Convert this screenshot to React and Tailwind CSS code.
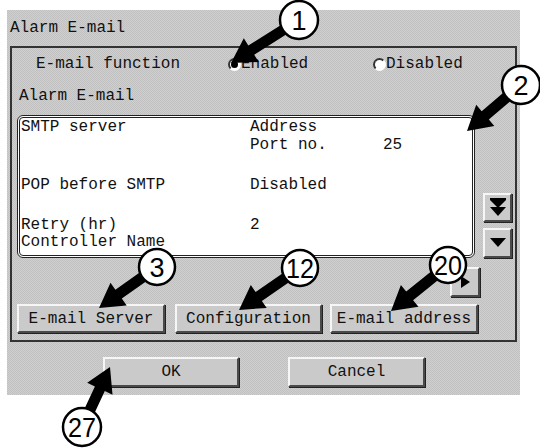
import React from 'react';

const FONT = { fontFamily: '"Liberation Mono", "DejaVu Sans Mono", monospace' };

// callouts: circle centre, radius, label, arrow tip
const CALLOUTS = [
  { cx: 299, cy: 20, r: 19, label: '1', tip: [231, 63] },
  { cx: 521, cy: 85, r: 19, label: '2', tip: [467, 131] },
  { cx: 157, cy: 267, r: 18, label: '3', tip: [99, 308] },
  { cx: 300, cy: 268, r: 18, label: '12', tip: [239, 310] },
  { cx: 448, cy: 265, r: 18, label: '20', tip: [391, 311] },
  { cx: 82, cy: 427, r: 19, label: '27', tip: [110, 367] },
];

function arrowPoints(x1, y1, x2, y2, shaft = 11, head = 28, headLen = 24) {
  const len = Math.hypot(x2 - x1, y2 - y1);
  const dx = (x2 - x1) / len;
  const dy = (y2 - y1) / len;
  const nx = -dy;
  const ny = dx;
  const bx = x2 - dx * headLen;
  const by = y2 - dy * headLen;
  const p = [
    [x1 + nx * shaft / 2, y1 + ny * shaft / 2],
    [bx + nx * shaft / 2, by + ny * shaft / 2],
    [bx + nx * head / 2, by + ny * head / 2],
    [x2, y2],
    [bx - nx * head / 2, by - ny * head / 2],
    [bx - nx * shaft / 2, by - ny * shaft / 2],
    [x1 - nx * shaft / 2, y1 - ny * shaft / 2],
  ];
  return p.map(([a, b]) => `${a.toFixed(1)},${b.toFixed(1)}`).join(' ');
}

function Callouts() {
  return (
    <svg className="absolute inset-0 pointer-events-none" width="540" height="448">
      {CALLOUTS.map((c) => (
        <polygon key={'a' + c.label} points={arrowPoints(c.cx, c.cy, c.tip[0], c.tip[1])} fill="#000" />
      ))}
      {CALLOUTS.map((c) => (
        <g key={'c' + c.label}>
          <circle cx={c.cx} cy={c.cy} r={c.r} fill="#fff" stroke="#000" strokeWidth="2.5" />
          <text
            x={c.cx}
            y={c.cy + 9.5}
            textAnchor="middle"
            fontSize="27"
            fontFamily='"Liberation Sans", Arial, sans-serif'
            fill="#000"
            textLength={c.label.length > 1 ? 28 : undefined}
            lengthAdjust="spacingAndGlyphs"
          >
            {c.label}
          </text>
        </g>
      ))}
    </svg>
  );
}

function Bevel({ className = '', children }) {
  return (
    <div
      className={
        'flex items-center justify-center border-2 border-t-[#f6f6f6] border-l-[#f6f6f6] border-r-[#4a4a4a] border-b-[#4a4a4a] bg-[#cacaca] shadow-[1px_1px_0_#222] ' +
        className
      }
    >
      {children}
    </div>
  );
}

function Radio({ checked }) {
  return (
    <span className="flex h-[13px] w-[13px] shrink-0 items-center justify-center rounded-full border-2 border-t-[#333] border-l-[#333] border-r-white border-b-white bg-white">
      {checked && <span className="h-[7px] w-[7px] rounded-full bg-black" />}
    </span>
  );
}

const ROWS = [
  { a: 'SMTP server', b: 'Address', c: '', mt: 'mt-0' },
  { a: '', b: 'Port no.', c: '25', mt: 'mt-0' },
  { a: 'POP before SMTP', b: 'Disabled', c: '', mt: 'mt-[22px]' },
  { a: 'Retry (hr)', b: '2', c: '', mt: 'mt-[22px]' },
  { a: 'Controller Name', b: '', c: '', mt: '-mt-[1px]' },
];

export default function App() {
  return (
    <div className="relative h-[448px] w-[540px] overflow-hidden bg-white text-[16px] text-[#111]" style={FONT}>
      <div className="ml-[7px] mt-[10px] flex h-[385px] w-[513px] flex-col bg-[#c8c8c8] bg-[repeating-conic-gradient(#c1c1c1_0_25%,#cfcfcf_0_50%)] bg-[length:2px_2px]">
        <div className="flex h-[36px] items-center pl-[3px]">Alarm E-mail</div>

        {/* group box */}
        <div className="ml-[3px] flex h-[296px] w-[507px] flex-col border-2 border-[#333]">
          <div className="flex h-[32px] items-center pl-[24px]">
            <span className="w-[192px]">E-mail function</span>
            <div className="flex w-[145px] items-center">
              <Radio checked />
              <span>Enabled</span>
            </div>
            <div className="flex items-center">
              <Radio />
              <span>Disabled</span>
            </div>
          </div>
          <div className="flex h-[32px] items-center pl-[7px]">Alarm E-mail</div>

          <div className="mt-[3px] flex items-end pl-[5px]">
            <div className="h-[143px] w-[458px] overflow-hidden rounded-[6px] border-[3px] border-double border-[#222] bg-white leading-[18px]">
              {ROWS.map((r, i) => (
                <div key={i} className={'flex ' + r.mt}>
                  <span className="w-[230px] pl-[1px]">{r.a}</span>
                  <span className="w-[133px]">{r.b}</span>
                  <span>{r.c}</span>
                </div>
              ))}
            </div>
            <div className="ml-[8px] flex flex-col gap-[6px]">
              <Bevel className="h-[29px] w-[29px]">
                <svg width="18" height="20" viewBox="0 0 18 20">
                  <polygon points="1,2 17,2 9,10" fill="#000" />
                  <polygon points="1,9 17,9 9,18" fill="#000" />
                  <rect x="1" y="0" width="16" height="2" fill="#000" />
                </svg>
              </Bevel>
              <Bevel className="h-[30px] w-[29px]">
                <svg width="18" height="12" viewBox="0 0 18 12">
                  <polygon points="1,1 17,1 9,10" fill="#000" />
                </svg>
              </Bevel>
            </div>
          </div>

          <div className="mt-[9px] flex h-[30px] pl-[438px]">
            <Bevel className="h-[30px] w-[30px]">
              <svg width="12" height="14" viewBox="0 0 12 14">
                <polygon points="2,1 11,7 2,13" fill="#000" />
              </svg>
            </Bevel>
          </div>

          <div className="mt-[7px] flex pl-[5px]">
            <Bevel className="h-[29px] w-[148px]">E-mail Server</Bevel>
            <Bevel className="ml-[10px] h-[29px] w-[147px]">Configuration</Bevel>
            <Bevel className="ml-[8px] h-[29px] w-[148px]">E-mail address</Bevel>
          </div>
        </div>

        <div className="mt-[15px] flex pl-[96px]">
          <Bevel className="h-[30px] w-[136px]">OK</Bevel>
          <Bevel className="ml-[49px] h-[30px] w-[137px]">Cancel</Bevel>
        </div>
      </div>

      <Callouts />
    </div>
  );
}
